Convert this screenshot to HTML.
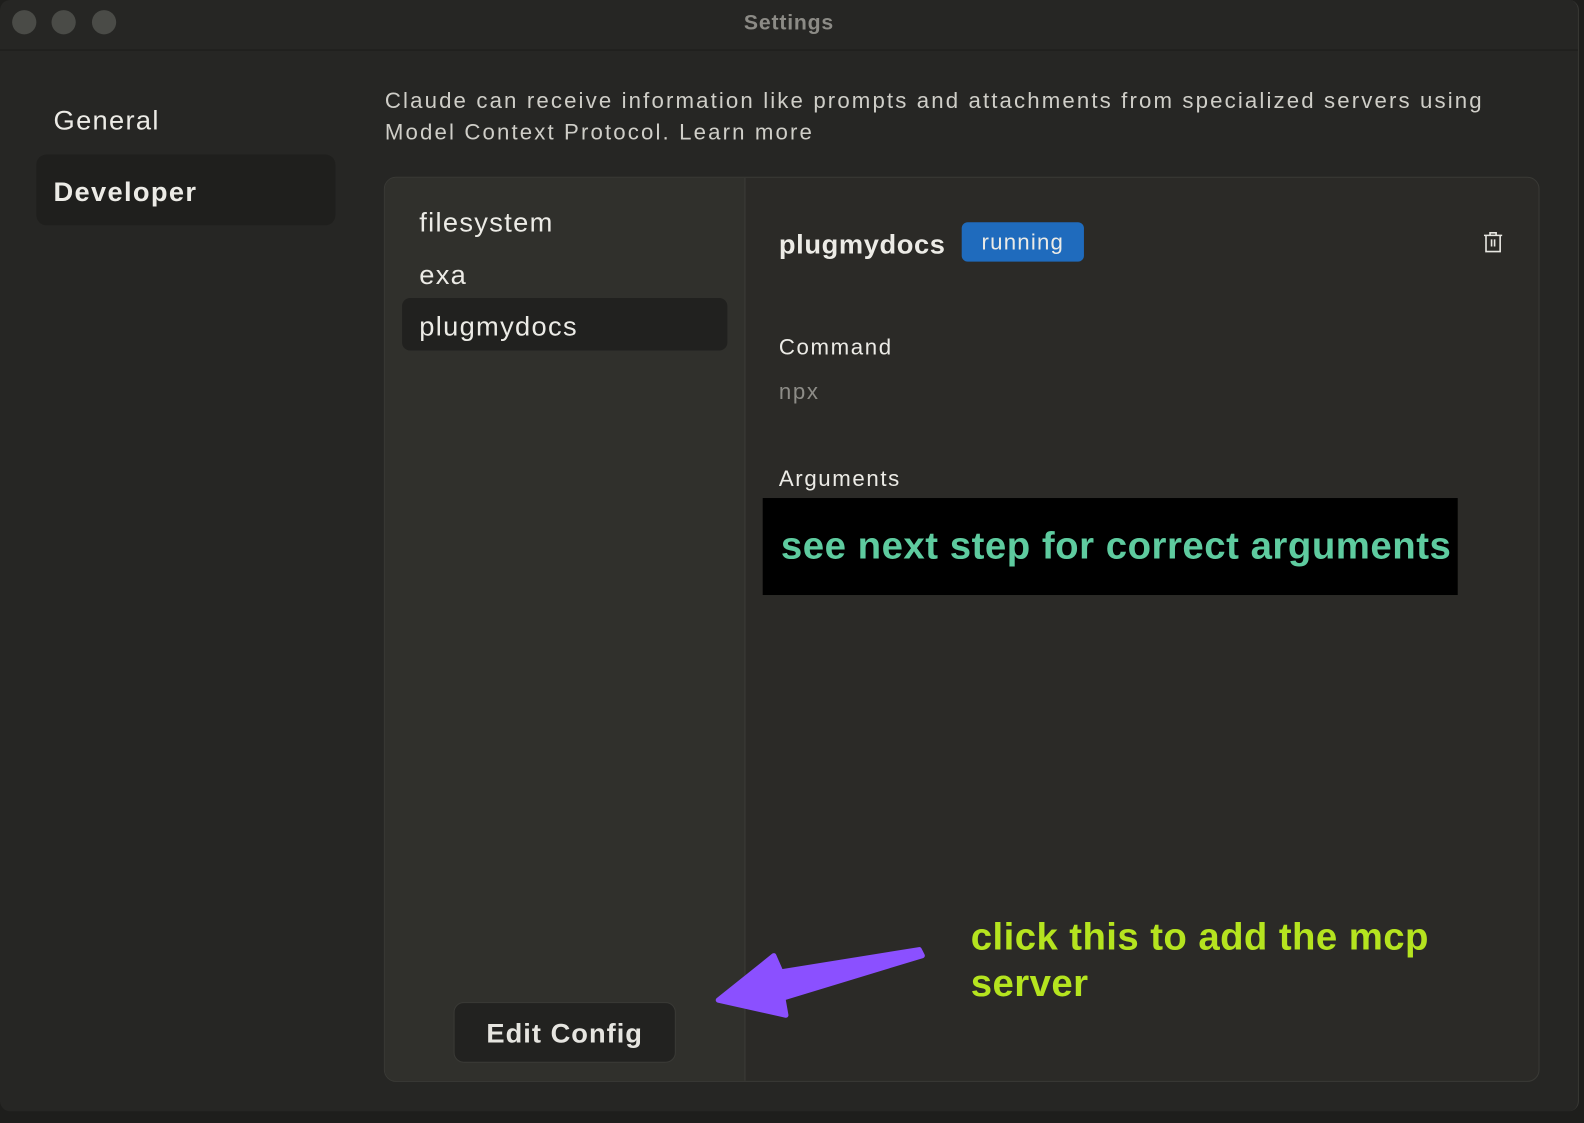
<!DOCTYPE html>
<html><head><meta charset="utf-8"><style>
*{margin:0;padding:0;box-sizing:border-box}
body{width:1584px;height:1112px;background:#1e1e1c;font-family:"Liberation Sans",sans-serif;color:#ecebe6;position:relative;overflow:hidden}
.wrap{position:absolute;left:0;top:0;width:1568px;height:1101px;transform:scale(1.0102);transform-origin:0 0}
.win{position:absolute;left:0;top:0;width:1563px;height:1100px;background:#262624;border-radius:10px;border-right:1px solid #3a3a37}
.tb{position:absolute;left:0;top:0;width:100%;height:50px;border-bottom:1px solid #1c1c1a}
.dot{position:absolute;top:10px;width:24px;height:24px;border-radius:50%;background:#4a4b47}
.title{position:absolute;top:11px;left:0;width:100%;text-align:center;font-size:21px;font-weight:bold;color:#8c8b86;letter-spacing:.8px}
.abs{position:absolute;white-space:nowrap}
.nav{font-size:27px;letter-spacing:1.3px}
.sel{position:absolute;left:36px;top:153px;width:296px;height:70px;background:#1f1f1d;border-radius:10px}
.panel{position:absolute;left:380px;top:175px;width:1144px;height:896px;border:1px solid #3a3a36;border-radius:12px;background:#2b2a27;overflow:hidden}
.list{position:absolute;left:0;top:0;width:357px;height:100%;background:#30302c;border-right:1px solid #3c3c38}
.li{font-size:27px;letter-spacing:1.3px}
.run{position:absolute;left:952px;top:220px;width:121px;height:39px;background:#1f6bbd;border-radius:6px;font-size:22px;letter-spacing:1.2px;text-align:center;line-height:39px}
.btn{position:absolute;left:449px;top:992px;width:220px;height:60px;background:#222220;border:1px solid #3a3a36;border-radius:10px;font-size:27px;font-weight:bold;color:#e6e5e0;text-align:center;line-height:60px;letter-spacing:1px}
</style></head><body>
<div class="wrap">
<div class="win">
<div class="tb"><div class="dot" style="left:12px"></div><div class="dot" style="left:51px"></div><div class="dot" style="left:91px"></div><div class="title">Settings</div></div>
<div class="abs nav" style="left:53px;top:104px">General</div>
<div class="sel"></div>
<div class="abs nav" style="left:53px;top:175px;font-weight:bold">Developer</div>
<div class="abs" style="left:381px;top:84px;font-size:22px;line-height:31px;color:#cfcec8;letter-spacing:2.1px">Claude can receive information like prompts and attachments from specialized servers using<br>Model Context Protocol. Learn more</div>
<div class="panel"><div class="list"></div></div>
<div class="abs" style="left:398px;top:295px;width:322px;height:52px;background:#21211f;border-radius:8px"></div>
<div class="abs li" style="left:415px;top:205px">filesystem</div>
<div class="abs li" style="left:415px;top:257px">exa</div>
<div class="abs li" style="left:415px;top:308px">plugmydocs</div>
<div class="abs" style="left:771px;top:227px;font-size:27px;font-weight:bold;letter-spacing:.6px">plugmydocs</div>
<div class="run">running</div>
<svg class="abs" style="left:1467px;top:228px" width="22" height="24" viewBox="0 0 22 24" fill="none" stroke="#e8e7e2" stroke-width="1.6"><path d="M2 5H20M8 5V2.5H14V5M4 5V21H18V5M9.5 9V16M12.5 9V16"/></svg>
<div class="abs" style="left:771px;top:331px;font-size:22px;letter-spacing:1.6px">Command</div>
<div class="abs" style="left:771px;top:375px;font-size:22px;color:#8d8c87;letter-spacing:1.6px">npx</div>
<div class="abs" style="left:771px;top:461px;font-size:22px;letter-spacing:1.6px">Arguments</div>
<div class="abs" style="left:755px;top:493px;width:688px;height:96px;background:#000"></div>
<div class="abs" style="left:773px;top:520px;font-size:38px;font-weight:bold;color:#5ecb9f;letter-spacing:.5px">see next step for correct arguments</div>
<div class="abs" style="left:961px;top:905px;font-size:38px;font-weight:bold;color:#b5e41f;line-height:46px;letter-spacing:.4px">click this to add the mcp<br>server</div>
<svg class="abs" style="left:0;top:0" width="1584" height="1112"><path d="M910 940 L773 962 L766 946 L711 990 L778 1005 L775 988 L913 946 Z" fill="#8b50ff" stroke="#8b50ff" stroke-width="5" stroke-linejoin="round"/></svg>
<div class="btn">Edit Config</div>
</div>
</div>
</body></html>
